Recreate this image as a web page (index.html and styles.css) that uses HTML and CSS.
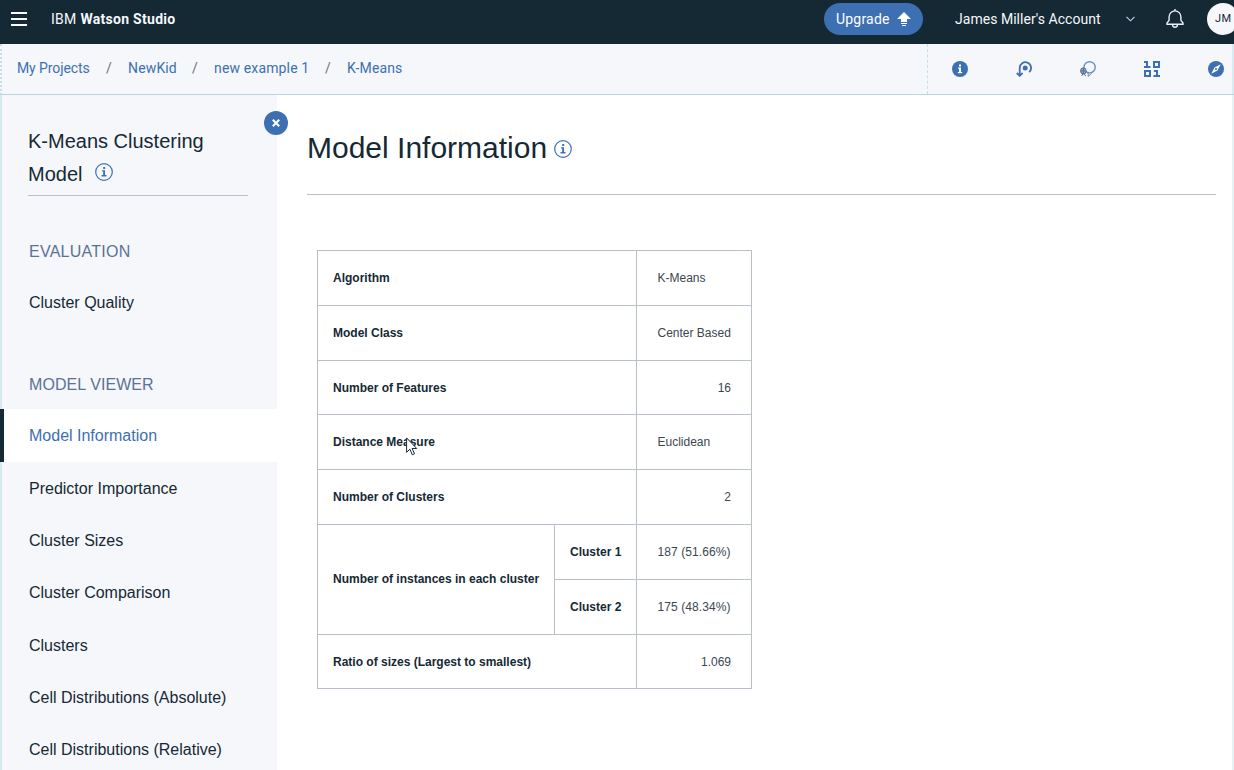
FILE: index.html
```html
<!DOCTYPE html>
<html lang="en">
<head>
<meta charset="utf-8">
<title>IBM Watson Studio</title>
<link rel="stylesheet" href="styles.css">
</head>
<body>
<header class="topbar">
  <svg class="menu" width="16" height="14" viewBox="0 0 16 14"><path d="M0 1h16M0 7h16M0 13h16" stroke="#fff" stroke-width="2"/></svg>
  <div class="brand">IBM <b>Watson Studio</b></div>
  <button class="upgrade"><span>Upgrade</span>
    <svg width="14" height="14" viewBox="0 0 14 14" fill="#fff"><path d="M7 0l7 7h-4v3H4V7H0zM4 11h6v1H4zM5 13h4v1H5z"/></svg>
  </button>
  <div class="account">James Miller's Account</div>
  <svg class="chevron" width="9" height="6" viewBox="0 0 9 6"><path d="M.5.8l4 4 4-4" fill="none" stroke="#c4d6e8" stroke-width="1.1"/></svg>
  <svg class="bell" width="18" height="20" viewBox="0 0 18 20" fill="none" stroke="#e6effa" stroke-width="1.4"><path d="M9 0v2M1 15.3v-1.2l2.1-2.8V7.8a5.9 5.9 0 0 1 11.8 0v3.5l2.1 2.8v1.2zM6.5 15.5a2.5 2.7 0 0 0 5 0"/></svg>
  <div class="avatar">JM</div>
</header>
<div class="subbar">
  <nav class="crumbs">
    <a class="c1">My Projects</a><i>/</i><a class="c2">NewKid</a><i>/</i><a class="c3">new example 1</a><i>/</i><a class="c4">K-Means</a>
  </nav>
  <div class="tools">
    <svg width="16" height="16" viewBox="0 0 16 16"><circle cx="8" cy="8" r="8" fill="#3d70b2"/><path d="M7 3.5h2v2H7zM6 6.5h3V11h1.2v1.2H5.8V11H7V7.7H6z" fill="#fff"/></svg>
    <svg width="16" height="16" viewBox="0 0 16 16" fill="none" stroke="#3d70b2" stroke-width="1.8"><path d="M3.7 14V7.1a5.7 5.7 0 1 1 9.5 4.1M.8 12l2.9 2.8L6.6 12"/><circle cx="9.2" cy="7" r="2.5" fill="#3d70b2" stroke="none"/></svg>
    <svg width="16" height="16" viewBox="0 0 16 16" fill="none"><circle cx="9.6" cy="6.3" r="5.6" stroke="#6b8fbd" stroke-width="1.4"/><path d="M8.2 12v3.4l3.4-3" stroke="#6c87aa"/><ellipse cx="3.4" cy="9.9" rx="2.8" ry="3.1" fill="#b5a5a0" stroke="#3d70b2"/><path d="M3.4 7v6M1.2 10h4M2.8 13l-1.2 2M4.4 12.8l1.3 2.4" stroke="#556f94"/></svg>
    <svg width="16" height="16" viewBox="0 0 16 16" fill="none" stroke="#3d70b2" stroke-width="2"><path d="M0 1h4M3 0v6M0 6h6.5M10 1h5v5h-5zM1 10h5v5H1zM10 10h4M13 9v6M9.5 15H16"/></svg>
    <svg width="16" height="16" viewBox="0 0 16 16"><circle cx="8" cy="8" r="8" fill="#3d70b2"/><path d="M12.7 3.3L9.5 9.5 3.3 12.7 6.5 6.5z" fill="#fff"/><circle cx="8" cy="8" r="1.1" fill="#3d70b2"/></svg>
  </div>
</div>
<div class="layout">
  <aside class="sidebar">
    <button class="close"><svg width="8" height="8" viewBox="0 0 8 8"><path d="M.8.8l6.4 6.4M7.2.8L.8 7.2" stroke="#fff" stroke-width="2"/></svg></button>
    <h2 class="side-title">K-Means Clustering Model <svg class="info" width="18" height="18" viewBox="0 0 18 18"><circle cx="9" cy="9" r="8.3" fill="none" stroke="#3d70b2" stroke-width="1.2"/><path d="M8.2 4h2v2h-2zM7 7.3h3V12h1.5v1.4h-5V12h1.7V8.6H7z" fill="#3d70b2"/></svg></h2>
    <div class="group first">EVALUATION</div>
    <a class="item">Cluster Quality</a>
    <div class="group second">MODEL VIEWER</div>
    <a class="item active">Model Information</a>
    <a class="item">Predictor Importance</a>
    <a class="item">Cluster Sizes</a>
    <a class="item">Cluster Comparison</a>
    <a class="item">Clusters</a>
    <a class="item">Cell Distributions (Absolute)</a>
    <a class="item">Cell Distributions (Relative)</a>
  </aside>
  <main class="main">
    <h1 class="title"><span>Model Information</span><svg width="18" height="18" viewBox="0 0 18 18"><circle cx="9" cy="9" r="8.3" fill="none" stroke="#3d70b2" stroke-width="1.2"/><path d="M8.2 4h2v2h-2zM7 7.3h3V12h1.5v1.4h-5V12h1.7V8.6H7z" fill="#3d70b2"/></svg></h1>
    <div class="table">
      <div class="th wide">Algorithm</div><div class="td">K-Means</div>
      <div class="th wide">Model Class</div><div class="td">Center Based</div>
      <div class="th wide">Number of Features</div><div class="td num">16</div>
      <div class="th wide">Distance Measure
        <svg class="cursor" width="12" height="19" viewBox="0 0 12 19"><path d="M.6.9v14.4l3.3-3.1 2.4 5.6 2.2-1-2.4-5.3h4.6z" fill="#fff" stroke="#152935"/></svg>
      </div><div class="td">Euclidean</div>
      <div class="th wide">Number of Clusters</div><div class="td num">2</div>
      <div class="th tall">Number of instances in each cluster</div><div class="th">Cluster 1</div><div class="td pct">187 (51.66%)</div>
      <div class="th">Cluster 2</div><div class="td pct">175 (48.34%)</div>
      <div class="th wide">Ratio of sizes (Largest to smallest)</div><div class="td num">1.069</div>
    </div>
  </main>
</div>
</body>
</html>
```
FILE: styles.css
```css
* { box-sizing: border-box; }
body { margin: 0; width: 1234px; height: 770px; overflow: hidden; background: #fff; color: #152935; font-family: "Liberation Sans", Arial, sans-serif; }
button { border: 0; padding: 0; font: inherit; }
svg { display: block; flex: none; }

.topbar { height: 44px; padding: 0 0 6px 11px; display: flex; align-items: center; background: #152935; color: #f5f7fb; font-family: Roboto, sans-serif; font-size: 14px; overflow: hidden; white-space: nowrap; }
.menu { flex: none; }
.brand { flex: none; margin-left: 24px; width: 773px; padding-bottom: 1px; letter-spacing: .29px; }
.brand b { font-weight: 700; }
.upgrade { width: 99px; height: 32px; flex: none; display: flex; align-items: center; padding-left: 12px; border-radius: 16px; background: #3d70b2; color: #fff; }
.upgrade span { width: 61px; padding-bottom: 1px; text-align: left; letter-spacing: .2px; }
.account { flex: none; margin-left: 32px; width: 171px; padding-bottom: 1px; letter-spacing: .03px; }
.bell { margin: 0 23px 0 31px; }
.avatar { width: 32px; height: 32px; flex: none; border-radius: 50%; background: #f5f7fb; color: #152935; font-size: 11px; line-height: 31px; padding-left: 8px; letter-spacing: .4px; }

.subbar { height: 51px; display: flex; background: #f5f7fb; border-bottom: 1px solid #b7d6e0; border-left: 2px dotted #c3dfe8; box-shadow: inset -2px 0 #dcebf1; }
.crumbs { width: 926px; padding: 0 0 2px 15px; display: flex; align-items: center; border-right: 1px dashed #c5dfeb; color: #3d70b2; font-family: Roboto, sans-serif; font-size: 14px; letter-spacing: .15px; white-space: nowrap; }
.crumbs i { width: 38px; padding-left: 16px; font-style: normal; color: #6c6f78; }
.c1 { width: 73px; letter-spacing: -.1px; }
.c2 { width: 48px; }
.c3 { width: 95px; }
.tools { display: flex; align-items: center; gap: 48px; padding-left: 24px; }

.layout { display: flex; height: 675px; box-shadow: inset -2px 0 #e8f2f5; }
.sidebar { position: relative; width: 277px; flex: none; background: #f5f7fb; box-shadow: inset 2px 0 #d5e9ef; }
.close { position: absolute; left: 264px; top: 16px; width: 24px; height: 24px; border-radius: 50%; background: #3d70b2; display: flex; align-items: center; justify-content: center; }
.side-title { margin: 0 29px 0 28px; padding-top: 30px; height: 101px; border-bottom: 1px solid #b8bfcb; font-size: 20px; font-weight: 400; line-height: 33px; }
.info { display: inline-block; margin-left: 7px; vertical-align: 0; }
.group { padding-left: 29px; height: 20px; line-height: 20px; font-size: 16px; color: #5a7394; }
.first { margin: 46px 0 14.4px; letter-spacing: .25px; }
.second { margin: 45.8px 0 14.8px; letter-spacing: .07px; }
.item { display: block; height: 52.35px; line-height: 53.4px; padding-left: 29px; font-size: 16px; }
.active { background: #fff; color: #3d70b2; box-shadow: inset 4px 0 #152935; }

.main { flex: 1; padding: 0 18px 0 30px; }
.title { margin: 0; height: 100px; padding-top: 6px; display: flex; align-items: center; border-bottom: 1px solid #b8bfcb; font-size: 30px; font-weight: 400; }
.title svg { margin: 2px 0 0 7px; }
.table { width: 435px; margin: 55px 0 0 10px; padding: 1px; display: grid; grid-template-columns: 236px 81px 114px; grid-template-rows: 54px 54px 53px 54px 54px 54px 54px 53px; gap: 1px; background: #b8bfcb; font-size: 12px; white-space: nowrap; }
.th, .td { display: flex; align-items: center; background: #fff; }
.th { position: relative; padding-left: 15px; font-weight: 700; }
.td { padding: 0 20px 0 20.5px; color: #3b4650; }
.wide { grid-column: span 2; }
.tall { grid-row: span 2; padding-bottom: 2px; }
.num { justify-content: flex-end; }
.pct { letter-spacing: .08px; }
.cursor { position: absolute; left: 88px; top: 22px; }
```
